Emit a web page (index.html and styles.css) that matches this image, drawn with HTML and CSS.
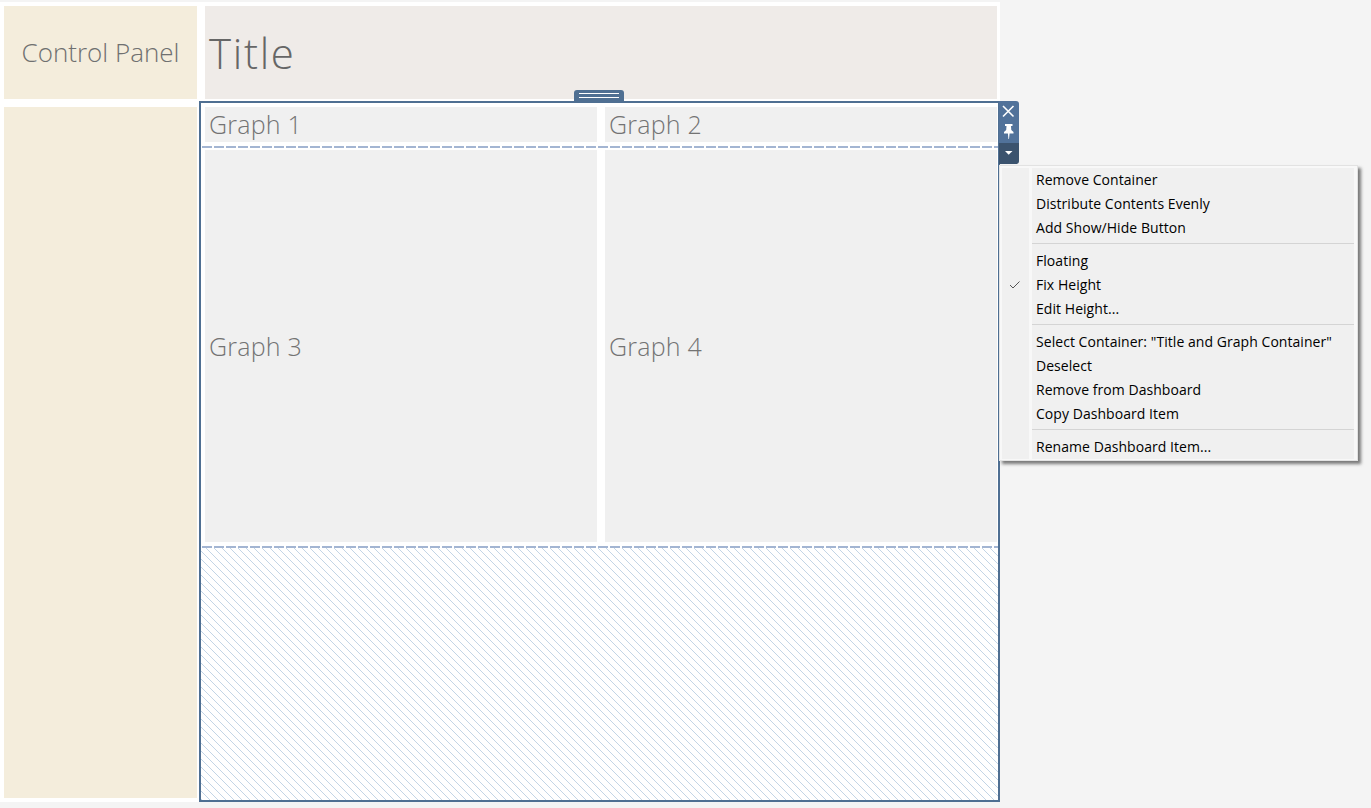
FILE: index.html
```html
<!DOCTYPE html>
<html lang="en">
<head>
<meta charset="utf-8">
<title>Dashboard</title>
<link rel="stylesheet" href="styles.css">
</head>
<body>
<div class="board">
  <div class="side">
    <div class="tile cream panel-head">Control Panel</div>
    <div class="tile cream panel-body"></div>
  </div>
  <div class="main">
    <div class="tile title-tile">Title</div>
    <div class="frame">
      <div class="row row-top">
        <div class="tile graph">Graph 1</div>
        <div class="tile graph">Graph 2</div>
      </div>
      <div class="dash"></div>
      <div class="row row-mid">
        <div class="tile graph">Graph 3</div>
        <div class="tile graph">Graph 4</div>
      </div>
      <div class="dash"></div>
      <svg class="hatch" aria-hidden="true">
        <defs>
          <pattern id="h" width="8" height="8" patternUnits="userSpaceOnUse" patternTransform="translate(5 0)">
            <rect x="0" y="0" width="1" height="1"/><rect x="1" y="1" width="1" height="1"/><rect x="2" y="2" width="1" height="1"/><rect x="3" y="3" width="1" height="1"/><rect x="4" y="4" width="1" height="1"/><rect x="5" y="5" width="1" height="1"/><rect x="6" y="6" width="1" height="1"/><rect x="7" y="7" width="1" height="1"/>
          </pattern>
        </defs>
        <rect width="100%" height="100%" fill="url(#h)"/>
      </svg>
      <div class="grip"><span></span><span></span></div>
      <div class="tools">
        <div class="tool-top">
          <svg width="20" height="20" viewBox="0 0 20 20"><path d="M4 5 14.500 15.500M14.500 5 4 15.500" stroke="#fff" stroke-width="1.600" fill="none"/></svg>
          <svg width="20" height="20" viewBox="0 0 20 20"><path d="M6 3H13.500V5H12L12.300 9 14.500 11V12.500H10.600L10 18H9.400L8.900 12.500H5V11L7.200 9 7.500 5H6Z" fill="#fff"/></svg>
        </div>
        <div class="tool-bottom"><svg width="20" height="20" viewBox="0 0 20 20"><path d="M6 8H13.500L9.700 11.800Z" fill="#fff"/></svg></div>
      </div>
      <div class="menu">
        <div class="menu-inner">
          <div class="menu-group">
            <div class="item">Remove Container</div>
            <div class="item">Distribute Contents Evenly</div>
            <div class="item">Add Show/Hide Button</div>
          </div>
          <div class="menu-group">
            <div class="item">Floating</div>
            <div class="item">Fix Height<svg class="check" width="12" height="10" viewBox="0 0 12 10"><path d="M1 5 4 8 10.500 1.500" stroke="#555" stroke-width="1" fill="none"/></svg></div>
            <div class="item">Edit Height...</div>
          </div>
          <div class="menu-group">
            <div class="item">Select Container: "Title and Graph Container"</div>
            <div class="item">Deselect</div>
            <div class="item">Remove from Dashboard</div>
            <div class="item">Copy Dashboard Item</div>
          </div>
          <div class="menu-group">
            <div class="item">Rename Dashboard Item...</div>
          </div>
        </div>
      </div>
    </div>
  </div>
</div>
</body>
</html>
```
FILE: styles.css
```css
* { box-sizing: border-box; }
html, body { margin: 0; height: 100%; }
body { background: #f4f4f4; font-family: "Open Sans", "Liberation Sans", sans-serif; overflow: hidden; }
.board { width: 1000px; height: 800px; margin-top: 2px; background: #fff; display: flex; padding: 4px 0 0 4px; }
.side { width: 193px; display: flex; flex-direction: column; gap: 8px; }
.tile { display: flex; align-items: center; }
.cream { background: #f4eddc; }
.panel-head { height: 93px; justify-content: center; padding-bottom: 1px; font-size: 26px; color: #6f7070; font-weight: 300; }
.panel-body { height: 691px; }
.main { margin-left: 2px; width: 801px; display: flex; flex-direction: column; }
.title-tile { margin: 0 3px 0 6px; height: 93px; background: #efebe8; font-size: 42px; letter-spacing: 1.700px; font-weight: 300; color: #666; padding: 0 0 0 4px; flex: none; }
.frame { position: relative; margin-top: 2px; width: 801px; height: 701px; border: 2px solid #4f6f92; display: flex; flex-direction: column; padding-top: 4px; }
.row { display: flex; gap: 8px; padding: 0 1px 0 4px; }
.graph { width: 392px; background: #f0f0f0; font-size: 25px; letter-spacing: .2px; font-weight: 300; color: #737373; padding-left: 4px; }
.row-top .graph { height: 35px; padding-bottom: 2px; }
.row-mid .graph { height: 392px; }
.dash { height: 2px; margin: 4px 0 0 1px; flex: none; background: repeating-linear-gradient(90deg, #a3b5d2 0 10px, transparent 10px 12px); }
.row-top + .dash { margin-bottom: 2px; }
.hatch { flex: 1; width: 100%; fill: #c3d5e6; display: block; }
.grip { position: absolute; left: 373px; top: -13px; width: 50px; height: 13px; background: #4f6f92; border-radius: 3px 3px 0 0; display: flex; flex-direction: column; gap: 3px; padding: 3px 5px 0; }
.grip span { display: block; height: 1px; background: #fff; }
.tools { position: absolute; left: 798px; top: -2px; width: 20px; height: 63px; border-radius: 0 3px 3px 0; overflow: hidden; }
.tool-top { height: 42px; background: #51729a; display: flex; flex-direction: column; }
.tool-bottom { height: 21px; background: #3b536e; }
.tools svg { display: block; }
.menu { position: absolute; left: 798px; top: 62px; width: 359px; background: #f8f8f8; padding: 2px 3px 1px 2px; border: 1px solid #e2e2e2; box-shadow: 3px 3px 3px rgba(0,0,0,.5); font-size: 14px; letter-spacing: .05px; color: #000; }
.menu-inner { position: relative; background: #f0f0f0; }
.menu-inner::before { content: ""; position: absolute; left: 27px; top: 0; bottom: 0; width: 3px; background: #f8f8f8; }
.menu-group { position: relative; padding-left: 30px; }
.menu-group + .menu-group { margin-top: 3px; padding-top: 6px; }
.menu-group + .menu-group::before { content: ""; position: absolute; left: 30px; right: 0; top: 0; height: 1px; background: #d4d4d4; }
.item { position: relative; height: 24px; line-height: 24px; padding-left: 4px; white-space: nowrap; }
.check { position: absolute; left: -23px; top: 7px; }
```
